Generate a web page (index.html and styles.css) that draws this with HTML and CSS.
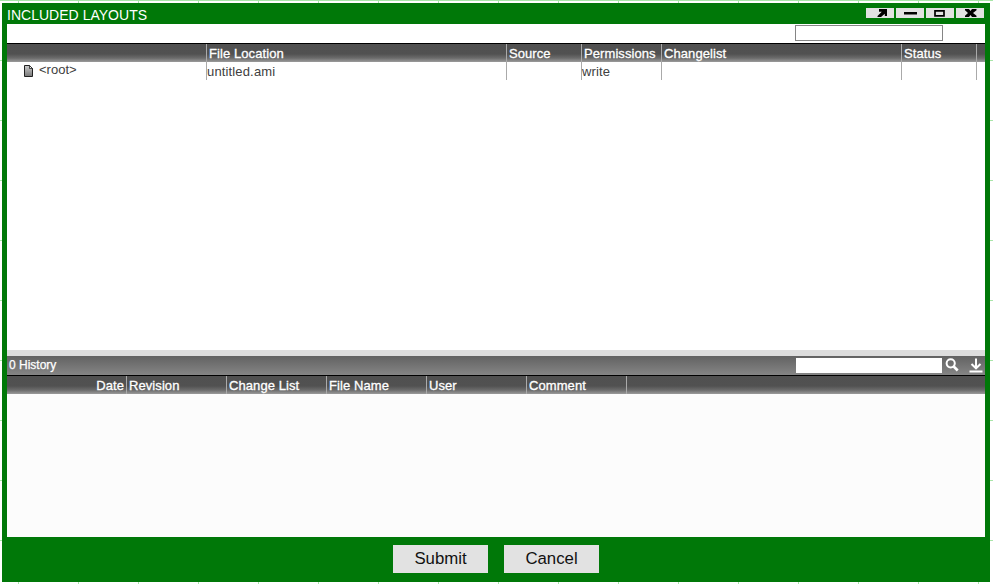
FILE: index.html
```html
<!DOCTYPE html>
<html lang="en">
<head>
<meta charset="utf-8">
<title>Included Layouts</title>
<link rel="stylesheet" href="styles.css">
</head>
<body>
<main class="window">
  <header class="titlebar">
    <h1>INCLUDED LAYOUTS</h1>
    <div class="controls">
      <button aria-label="Pop out"><svg width="28" height="10" viewBox="0 0 28 10"><path d="M13 1h8v7h-2.2V5.7L15 9h-3.5V8l4.3-4.2H13z"/></svg></button>
      <button aria-label="Minimize"><svg width="28" height="10" viewBox="0 0 28 10"><path d="M8 4h13v2.5H8z"/></svg></button>
      <button aria-label="Maximize"><svg width="28" height="10" viewBox="0 0 28 10"><path d="M9 2.8h9v5H9z" fill="none" stroke="#000" stroke-width="1.7"/></svg></button>
      <button aria-label="Close"><svg width="28" height="10" viewBox="0 0 28 10"><path d="M9 1h4l1.5 2L16 1h4.5v1.2L17 5l3.5 2.8V9H16l-1.5-2L13 9H9V7.8L12 5 9 2.2z"/></svg></button>
    </div>
  </header>
  <section class="layouts">
    <div class="search-row"><input class="search outlined" type="text" aria-label="Search layouts"></div>
    <div class="table-head layout-grid"><span></span><span>File Location</span><span>Source</span><span>Permissions</span><span>Changelist</span><span>Status</span><span></span></div>
    <div class="table-row layout-grid">
      <span class="root"><svg width="9" height="12" viewBox="0 0 9 12"><defs><linearGradient id="page" x2="0" y2="1"><stop stop-color="#ccc"/><stop offset="1" stop-color="#777"/></linearGradient></defs><path d="M.5.5h5l3 3v8h-8z" fill="url(#page)" stroke="#222"/><path d="M5.5.5v3h3z" fill="#eee" stroke="#222" stroke-width=".8"/></svg>&lt;root&gt;</span>
      <span class="location">untitled.ami</span><span></span><span class="location">write</span><span></span><span></span><span></span>
    </div>
  </section>
  <div class="splitter"></div>
  <section class="history">
    <div class="history-bar">
      <h2>0 History</h2>
      <input class="search" type="text" aria-label="Search history">
      <svg class="icon-search" width="14" height="14" viewBox="0 0 14 14"><circle cx="5.7" cy="5.3" r="4.1"/><path d="M8.7 8.5l4 4" stroke-width="2.6"/></svg>
      <svg class="icon-download" width="14" height="15" viewBox="0 0 14 15"><path d="M7 .5v9.5M2.5 6L7 10.3 11.5 6M.5 13.5h13"/></svg>
    </div>
    <div class="table-head history-grid"><span class="date">Date</span><span>Revision</span><span>Change List</span><span>File Name</span><span>User</span><span>Comment</span><span></span></div>
  </section>
  <footer class="actions"><button>Submit</button><button>Cancel</button></footer>
</main>
</body>
</html>
```
FILE: styles.css
```css
* { box-sizing: border-box; }
body {
  margin: 0;
  height: 584px;
  padding: 3px 3px 2px 2px;
  overflow: hidden;
  font-family: "Liberation Sans", Arial, sans-serif;
  background-color: #fff;
  background-image: linear-gradient(90deg, #a9e6a9 1px, transparent 1px), linear-gradient(#a9e6a9 1px, transparent 1px);
  background-size: 60px 60px;
  background-position: 18px 0, 0 0;
}
h1, h2 { margin: 0; font-weight: 400; color: #fff; }
button { border: 0; padding: 0; background: #e2e2e2; font-family: inherit; }
.window {
  width: 988px;
  height: 579px;
  padding: 0 5px;
  background: #007808;
  display: flex;
  flex-direction: column;
}
.titlebar { height: 21px; display: flex; justify-content: space-between; }
.titlebar h1 { font-size: 14px; line-height: 24px; letter-spacing: .02px; }
.controls { display: flex; gap: 2px; padding: 5px 1px 0 0; }
.controls button { width: 28px; height: 10px; }
.controls svg { display: block; }
.layouts { height: 326px; background: #fff; }
.search-row { height: 19px; padding: 1px 42px 0 0; display: flex; justify-content: flex-end; }
.search { width: 146px; height: 15px; border: 0; padding: 0 2px; background: #fff; }
.search.outlined { width: 148px; height: 16px; border: 1px solid #858585; }
.table-head {
  height: 19px;
  border-top: 1px solid #000;
  background: linear-gradient(#505050 0, #515151 55%, #6b6b6b 78%, #9b9b9b 100%);
  color: #fff;
  font-size: 13px;
  line-height: 19px;
  letter-spacing: .08px;
  -webkit-text-stroke: .3px #fff;
}
.layout-grid { display: grid; grid-template-columns: 199px 300px 75px 80px 240px 75px 1fr; }
.history-grid { display: grid; grid-template-columns: 119px repeat(5, 100px) 1fr; }
.layout-grid > span, .history-grid > span { height: 18px; border-left: 1px solid #aaa; white-space: nowrap; }
.layout-grid > span:first-child, .history-grid > span:first-child { border-left: 0; }
.table-head > span { padding-left: 2px; }
.table-row { height: 18px; font-size: 13px; line-height: 19px; color: #404040; }
.table-row .location { letter-spacing: .15px; }
.table-row .root { display: flex; gap: 6px; padding: 3px 0 0 17px; line-height: 10px; }
.root svg { flex: none; }
.table-head .date { text-align: right; padding-right: 2px; }
.splitter { height: 6px; background: #ddd; }
.history { height: 181px; background: #fcfcfc; }
.history-bar { height: 19px; display: flex; align-items: flex-start; background: linear-gradient(#626262, #858585); }
.history-bar h2 { flex: 1; padding-left: 2px; font-size: 12px; line-height: 18px; -webkit-text-stroke: .25px #fff; }
.history-bar .search { margin-top: 2px; }
.history-bar svg { fill: none; stroke: #fff; stroke-width: 2; }
.icon-search { margin: 2px 0 0 3px; }
.icon-download { margin: 2px 2px 0 10px; }
.actions { display: flex; justify-content: center; gap: 16px; padding-top: 8px; }
.actions button { width: 95px; height: 28px; padding-bottom: 1px; font-size: 16.8px; color: #111; }
```
